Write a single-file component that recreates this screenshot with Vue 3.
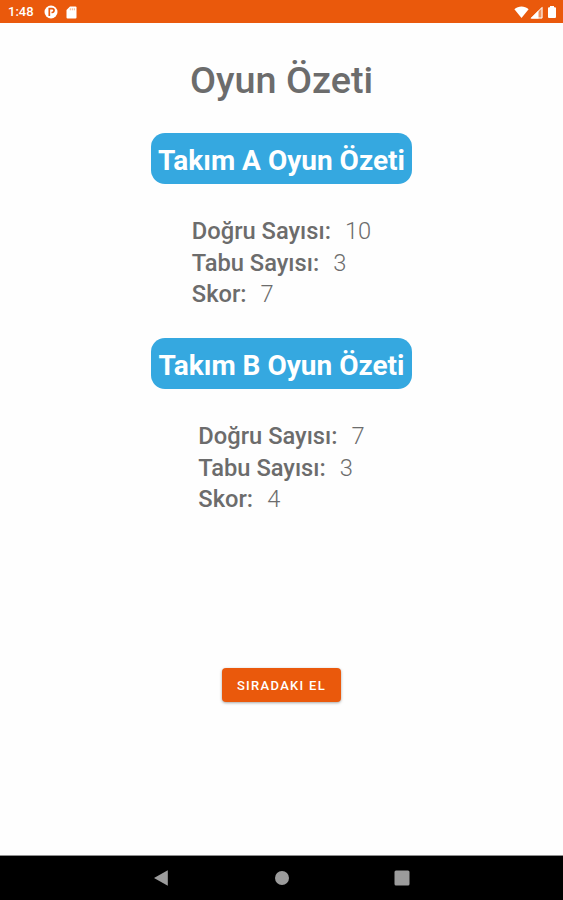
<template>
  <div class="screen">
    <header class="status-bar">
      <span class="clock">1:48</span>
      <svg class="icon-app" viewBox="0 0 14 14">
        <circle cx="7" cy="7" r="6.5" fill="#fff" />
        <path
          d="M5.3 11V3.6h2.8a1.9 1.9 0 0 1 0 3.9H7.5"
          fill="none"
          stroke="#ea590c"
          stroke-width="1.7"
        />
      </svg>
      <svg class="icon-card" viewBox="0 0 11 13">
        <path
          d="M4 .5h5.5a1 1 0 0 1 1 1v10a1 1 0 0 1-1 1h-8a1 1 0 0 1-1-1V4z"
          fill="#fff"
        />
        <path d="M4.3 2.3v2M6.3 2.3v2M8.3 2.3v2" stroke="#f5ad86" />
      </svg>
      <div class="spacer"></div>
      <svg class="icon-wifi" viewBox="0 0 15 12">
        <path d="M7.5 12L.4 3.2C4.5-.4 10.5-.4 14.6 3.2z" fill="#fff" />
      </svg>
      <svg class="icon-signal" viewBox="0 0 13 13">
        <path d="M12.5.5v12H.5z" fill="#fff" fill-opacity=".35" />
        <path d="M8.5 4.5v8h-8z" fill="#fff" />
        <path d="M12 1.5V12H1.5z" fill="none" stroke="#fff" />
      </svg>
      <svg class="icon-battery" viewBox="0 0 8 12">
        <path
          d="M2 0h4v1.3h1a1 1 0 0 1 1 1V11a1 1 0 0 1-1 1H1a1 1 0 0 1-1-1V2.3a1 1 0 0 1 1-1h1z"
          fill="#fff"
        />
      </svg>
    </header>

    <main class="content">
      <h1 class="title">Oyun Özeti</h1>
      <section v-for="team in teams" :key="team.name" class="team">
        <h2 class="team-name">{{ team.name }} Oyun Özeti</h2>
        <div class="stats">
          <p v-for="stat in team.stats" :key="stat.label" class="stat">
            <span class="label">{{ stat.label }}:</span>
            <span class="value">{{ stat.value }}</span>
          </p>
        </div>
      </section>
      <button class="next-button">SIRADAKI EL</button>
    </main>

    <nav class="nav-bar">
      <svg class="nav-icon" viewBox="0 0 16 16">
        <path d="M13.8.3v15.4L0 8z" fill="#9c9c9c" />
      </svg>
      <svg class="nav-icon" viewBox="0 0 16 16">
        <circle cx="8" cy="8" r="7" fill="#9c9c9c" />
      </svg>
      <svg class="nav-icon" viewBox="0 0 16 16">
        <rect x=".5" y=".5" width="15" height="15" rx="1.5" fill="#9c9c9c" />
      </svg>
    </nav>
  </div>
</template>

<script setup>
import { ref } from "vue";

const createStats = (correct, taboo, score) => [
  { label: "Doğru Sayısı", value: correct },
  { label: "Tabu Sayısı", value: taboo },
  { label: "Skor", value: score },
];

const teams = ref([
  { name: "Takım A", stats: createStats(10, 3, 7) },
  { name: "Takım B", stats: createStats(7, 3, 4) },
]);
</script>

<style>
body {
  margin: 0;
}
</style>

<style scoped>
.screen {
  display: flex;
  flex-direction: column;
  height: 100vh;
  overflow: hidden;
  background: #fefefe;
  font-family: Roboto, sans-serif;
  color: #6c6c6c;
}

.status-bar {
  display: flex;
  align-items: center;
  box-sizing: border-box;
  height: 23px;
  padding: 1px 7px 0 8px;
  background: #ea590c;
  color: #ffffff;
}

.clock {
  width: 36px;
  font-size: 13px;
  font-weight: 500;
  line-height: 22px;
  white-space: nowrap;
}

.icon-app {
  width: 14px;
  height: 14px;
}

.icon-card {
  width: 11px;
  height: 13px;
  margin-left: 8px;
}

.spacer {
  flex: 1;
}

.icon-wifi {
  width: 15px;
  height: 12px;
}

.icon-signal {
  width: 13px;
  height: 13px;
  margin-left: 1px;
}

.icon-battery {
  width: 8px;
  height: 12px;
  margin-left: 5px;
}

.content {
  display: flex;
  flex: 1;
  flex-direction: column;
  align-items: center;
}

.title {
  margin: 32px 0 0;
  font-size: 37.8px;
  font-weight: 500;
  line-height: 50px;
}

.team {
  display: flex;
  flex-direction: column;
  align-items: center;
  height: 205px;
}

.title + .team {
  margin-top: 28px;
}

.team-name {
  display: flex;
  align-items: center;
  justify-content: center;
  box-sizing: border-box;
  width: 261px;
  height: 51px;
  margin: 0;
  padding-top: 3px;
  border-radius: 14px;
  background: #35a8e0;
  color: #ffffff;
  font-size: 28px;
  font-weight: 700;
  white-space: nowrap;
}

.stats {
  margin-top: 32.4px;
}

.stat {
  display: flex;
  gap: 14px;
  margin: 0;
  font-size: 23.7px;
  line-height: 31.4px;
}

.label {
  font-weight: 500;
}

.value {
  font-weight: 300;
}

.next-button {
  width: 119px;
  height: 34px;
  margin-top: 125px;
  padding: 0;
  border: 0;
  border-radius: 4px;
  background: #ea590c;
  box-shadow: 0 1px 3px rgba(0, 0, 0, 0.35);
  color: #ffffff;
  font-family: inherit;
  font-size: 13px;
  font-weight: 500;
  letter-spacing: 1.3px;
}

.nav-bar {
  display: flex;
  align-items: center;
  justify-content: center;
  gap: 104px;
  box-sizing: border-box;
  height: 45px;
  border-top: 1px solid #8e8e8e;
  background: #000000;
}

.nav-icon {
  width: 16px;
  height: 16px;
}
</style>
